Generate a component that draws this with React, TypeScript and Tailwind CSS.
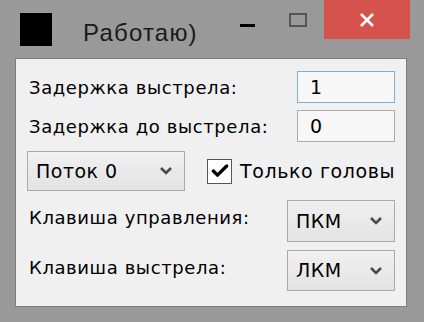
import { Check } from "lucide-react";

const font = { fontFamily: '"DejaVu Sans", "Liberation Sans", Arial, sans-serif' };

function Chevron() {
  return (
    <svg width="14" height="12" viewBox="0 0 14 12" className="shrink-0">
      <path d="M2 3 L7 8 L12 3" fill="none" stroke="#4a4a4a" strokeWidth="2.6" />
    </svg>
  );
}

function Combo({ label, w, h }: { label: string; w: string; h: string }) {
  return (
    <div
      className={`flex items-center justify-between border border-[#a9a9a9] bg-gradient-to-b from-[#f0f0f0] to-[#e3e3e3] pl-[8px] pr-[11px] ${w} ${h}`}
    >
      <span className="text-[19px] tracking-[0.5px] text-black">{label}</span>
      <Chevron />
    </div>
  );
}

export default function App() {
  return (
    <div className="flex h-[322px] w-[424px] flex-col bg-[#999999]" style={font}>
      {/* title bar */}
      <div className="flex h-[58px] items-start">
        <div className="ml-[20px] mt-[13px] h-[33px] w-[32px] shrink-0 bg-black" />
        <div
          className="ml-[31px] mt-[15px] text-[24px] tracking-[1.2px] text-[#1a1a1a]"
          style={{ fontFamily: '"Liberation Sans", Arial, sans-serif' }}
        >
          Работаю)
        </div>
        <div className="ml-auto mt-[24px] h-[3px] w-[15px] shrink-0 bg-black" />
        <div className="ml-[34px] mt-[13px] h-[14px] w-[18px] shrink-0 border-2 border-[#555]" />
        <div className="ml-[17px] mr-[14px] flex h-[39px] w-[86px] shrink-0 items-center justify-center bg-[#d5524d]">
          <svg width="16" height="16" viewBox="0 0 16 16">
            <path d="M2 2 L14 14 M14 2 L2 14" stroke="white" strokeWidth="2.6" />
          </svg>
        </div>
      </div>

      {/* client area */}
      <div className="ml-[15px] mr-[17px] h-[249px] border border-[#7d7d7d] bg-[#f0f0f0] pt-[12px] text-[18px] tracking-[0.6px] text-black">
        <div className="flex h-[32px] items-center justify-between pl-[13px] pr-[11px]">
          <span>Задержка выстрела:</span>
          <div className="flex h-[32px] w-[98px] items-center border border-[#7ab0e0] bg-[#f7f7f7] pl-[12px] text-[19px]">
            1
          </div>
        </div>
        <div className="mt-[7px] flex h-[32px] items-center justify-between pl-[13px] pr-[11px]">
          <span>Задержка до выстрела:</span>
          <div className="flex h-[32px] w-[98px] items-center border border-[#acacac] bg-[#f7f7f7] pl-[12px] text-[19px]">
            0
          </div>
        </div>
        <div className="mt-[9px] flex h-[40px] items-center pl-[11px]">
          <Combo label="Поток 0" w="w-[158px]" h="h-[40px]" />
          <div className="ml-[22px] flex h-[25px] w-[25px] items-center justify-center border border-[#555] bg-white">
            <Check size={20} strokeWidth={4} color="#000" />
          </div>
          <span className="ml-[8px] text-[19px]">Только головы</span>
        </div>
        <div className="mt-[9px] flex h-[42px] items-center justify-between pl-[13px] pr-[11px]">
          <span className="-mt-[8px]">Клавиша управления:</span>
          <Combo label="ПКМ" w="w-[108px]" h="h-[42px]" />
        </div>
        <div className="mt-[8px] flex h-[41px] items-center justify-between pl-[13px] pr-[11px]">
          <span className="-mt-[6px]">Клавиша выстрела:</span>
          <Combo label="ЛКМ" w="w-[108px]" h="h-[41px]" />
        </div>
      </div>
    </div>
  );
}
